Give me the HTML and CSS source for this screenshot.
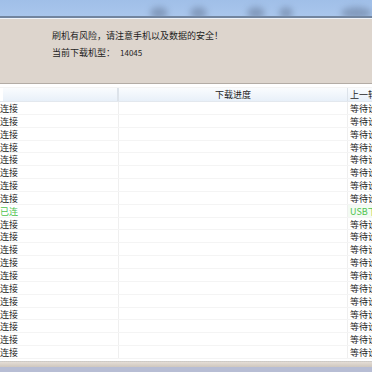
FILE: index.html
```html
<!DOCTYPE html>
<html lang="zh-CN">
<head>
    <meta charset="UTF-8">
    <title>刷机工具</title>
    <link rel="stylesheet" href="styles.css">
</head>
<body>

    <!-- top toolbar (blurred icons) -->
    <div class="banner">
        <div class="tool t1"></div>
        <div class="tool t2"></div>
        <div class="tool t3"></div>
        <div class="tool t4"></div>
        <div class="tool t5"></div>
    </div>

    <!-- warning panel -->
    <div class="info">
        <p>刷机有风险，请注意手机以及数据的安全！</p>
        <p>当前下载机型： <span class="model">14045</span></p>
    </div>

    <!-- port list -->
    <div class="list">
        <div class="row head">
            <div class="cell c1"></div>
            <div class="cell c2">下载进度</div>
            <div class="cell c3">上一轮结果</div>
        </div>
        <div id="rows"></div>
    </div>

    <div class="footer"></div>

    <script>
        // build the 20 port rows, row 9 is the connected one
        const rows = document.getElementById("rows");
        for (let i = 0; i < 20; i++) {
            const ok = i === 8;
            const row = document.createElement("div");
            row.className = ok ? "row ok" : "row";
            row.innerHTML =
                '<div class="cell c1">' + (ok ? "已连" : "连接") + '</div>' +
                '<div class="cell c2"></div>' +
                '<div class="cell c3">' + (ok ? "USB下载中" : "等待设备连接") + '</div>';
            rows.appendChild(row);
        }
    </script>

</body>
</html>
```

FILE: styles.css
```css
body {
    margin: 0;
    width: 372px;
    height: 372px;
    overflow: hidden;
    background-color: #fff;
    font-family: "Noto Sans CJK SC", "Liberation Sans", sans-serif;
    color: #1e1e1e;
}

/* blue toolbar strip at the top */
.banner {
    height: 16px;
    display: flex;
    align-items: flex-end;
    padding-left: 150px;
    gap: 18px;
    background: linear-gradient(#a0bfe8, #a9c6ec);
    border-bottom: 2px solid #72859f;
    box-shadow: 0 1px 0 #eef3fa;
    overflow: hidden;
}

.tool {
    width: 20px;
    height: 12px;
    margin-bottom: -3px;
    border-radius: 50%;
    background-color: #7389aa;
    filter: blur(3px);
    opacity: 0.7;
}

.t2 { margin-left: 4px; }
.t3 { margin-left: 22px; }
.t4 { width: 16px; margin-left: -4px; }
.t5 { width: 36px; margin-left: 30px; }

/* beige warning panel */
.info {
    height: 56px;
    margin-top: 1px;
    padding: 8px 0 0 52px;
    background-color: #ddd5cd;
    border-bottom: 1px solid #b3aca5;
    font-size: 9px;
}

.info p {
    margin: 0;
    line-height: 17px;
}

.model {
    margin-left: 3px;
    font-size: 8px;
}

/* list */
.list {
    margin-top: 3px;
}

.row {
    display: flex;
    height: 12.85px;
    border-bottom: 1px solid #f4f4f4;
    box-sizing: border-box;
    font-size: 9px;
    line-height: 13px;
}

.cell {
    overflow: hidden;
    white-space: nowrap;
    box-sizing: border-box;
}

.c1 {
    width: 119px;
    border-right: 1px solid #efefef;
}

.c2 {
    width: 229px;
    border-right: 1px solid #efefef;
}

.c3 {
    flex: 1;
    padding-left: 2px;
}

.row.head {
    height: 15px;
    border-top: 1px solid #f4f4f4;
    border-bottom: 1px solid #e3e8ee;
    background: linear-gradient(#fafcfe, #e8f0f9);
    line-height: 14px;
}

.head .c1 {
    border-left: 3px solid #fff;
    border-right: 2px solid #dde3ea;
}

.head .c2 {
    text-align: center;
    border-right: 1px solid #dde3ea;
}

.row.ok {
    color: #4ec24e;
}

.row.ok .c3 {
    background: linear-gradient(to right, #fff, #f3fbf3 0);
}

/* bottom window edge */
.footer {
    margin-top: 2px;
    height: 5px;
    border-top: 1px dotted #ccc;
    background: linear-gradient(#e4ddd6, #cfc7be);
    border-bottom: 6px solid #b7bdd4;
}
```
